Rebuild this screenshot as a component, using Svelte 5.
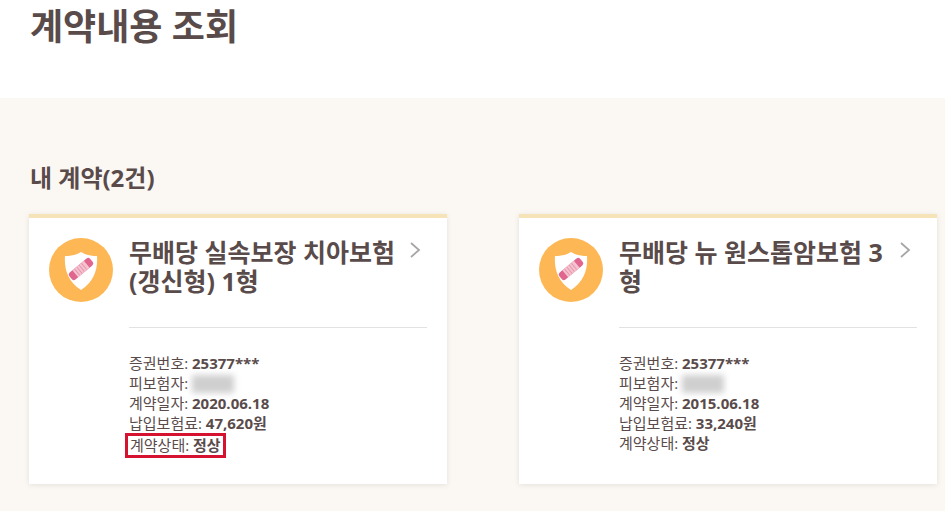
<script lang="ts">
  interface Contract {
    name: string;
    policyNo: string;
    date: string;
    premium: string;
    status: string;
    marked?: boolean;
  }

  const contracts: Contract[] = [
    {
      name: "무배당 실속보장 치아보험 (갱신형) 1형",
      policyNo: "25377***",
      date: "2020.06.18",
      premium: "47,620원",
      status: "정상",
      marked: true,
    },
    {
      name: "무배당 뉴 원스톱암보험 3 형",
      policyNo: "25377***",
      date: "2015.06.18",
      premium: "33,240원",
      status: "정상",
    },
  ];
</script>

<div class="page">
  <header class="top">
    <h1>계약내용 조회</h1>
  </header>

  <main class="section">
    <h2>내 계약(2건)</h2>
    <div class="cards">
      {#each contracts as c}
        <article class="card">
          <div class="icon">
            <svg viewBox="0 0 64 64" width="64" height="64" aria-hidden="true">
              <circle cx="32" cy="32" r="32" fill="#fdb855" />
              <path d="M32 14 C37 17 42 18 48 18 C49 31 45 44 32 52 C19 44 15 31 16 18 C22 18 27 17 32 14 Z" fill="#fff" />
              <g transform="rotate(-40 32 31)">
                <rect x="18.5" y="26.5" width="27" height="9" rx="2.5" fill="#e0668f" />
                <rect x="24.5" y="26.5" width="15" height="9" fill="#f4c3cf" />
                <path d="M27 27 v8 M30 27 v8 M33 27 v8 M36 27 v8" stroke="#e795ad" stroke-width="1" />
              </g>
            </svg>
          </div>
          <div class="body">
            <div class="head">
              <h3>{c.name}</h3>
              <svg class="chevron" viewBox="0 0 12 18" width="12" height="18" aria-hidden="true">
                <path d="M2 2 L10 9 L2 16" fill="none" stroke="#a9a5a5" stroke-width="1.8" />
              </svg>
            </div>
            <ul class="info">
              <li>증권번호: <b>{c.policyNo}</b></li>
              <li>피보험자: <span class="blur"></span></li>
              <li>계약일자: <b>{c.date}</b></li>
              <li>납입보험료: <b>{c.premium}</b></li>
              <li><span class:mark={c.marked}>계약상태: <b>{c.status}</b></span></li>
            </ul>
          </div>
        </article>
      {/each}
    </div>
  </main>
</div>

<style>
  :global(body) {
    margin: 0;
    background: #fff;
  }

  .page {
    width: 945px;
    height: 511px;
    overflow: hidden;
    font-family: "Open Sans", "Noto Sans CJK KR", sans-serif;
    color: #5a4b4b;
  }

  .top {
    height: 98px;
    padding: 4px 0 0 30px;
    box-sizing: border-box;
    background: #fff;
  }

  h1 {
    margin: 0;
    font-size: 36px;
    line-height: 46px;
    font-weight: 700;
  }

  .section {
    height: 413px;
    padding: 64px 8px 0 29px;
    box-sizing: border-box;
    background: #fbf8f4;
  }

  h2 {
    margin: 0 0 20px 1px;
    font-size: 24px;
    line-height: 32px;
    font-weight: 700;
  }

  .cards {
    display: flex;
    gap: 72px;
  }

  .card {
    display: flex;
    gap: 16px;
    width: 418px;
    height: 270px;
    padding: 20px 20px 0;
    box-sizing: border-box;
    background: #fff;
    border-top: 4px solid #f7e3b8;
    box-shadow: 0 1px 5px rgba(90, 75, 60, 0.14);
  }

  .icon {
    flex: none;
    width: 64px;
    height: 64px;
  }

  .body {
    flex: 1;
    min-width: 0;
  }

  .head {
    display: flex;
    justify-content: space-between;
    align-items: flex-start;
    height: 89px;
    border-bottom: 1px solid #e4e2e0;
  }

  h3 {
    margin: 0;
    width: 272px;
    font-size: 25px;
    line-height: 29px;
    font-weight: 700;
    word-break: keep-all;
  }

  .chevron {
    margin: 3px 6px 0 0;
  }

  .info {
    margin: 0;
    padding: 25px 0 0;
    list-style: none;
    font-size: 15px;
    line-height: 20px;
  }

  .blur {
    display: inline-block;
    width: 42px;
    height: 18px;
    vertical-align: -4px;
    background: #cfcfcf;
    filter: blur(3px);
  }

  .mark {
    display: inline-block;
    margin: 0 0 0 -4px;
    padding: 0 2px;
    line-height: 19px;
    border: 3px solid #d5122f;
  }
</style>
